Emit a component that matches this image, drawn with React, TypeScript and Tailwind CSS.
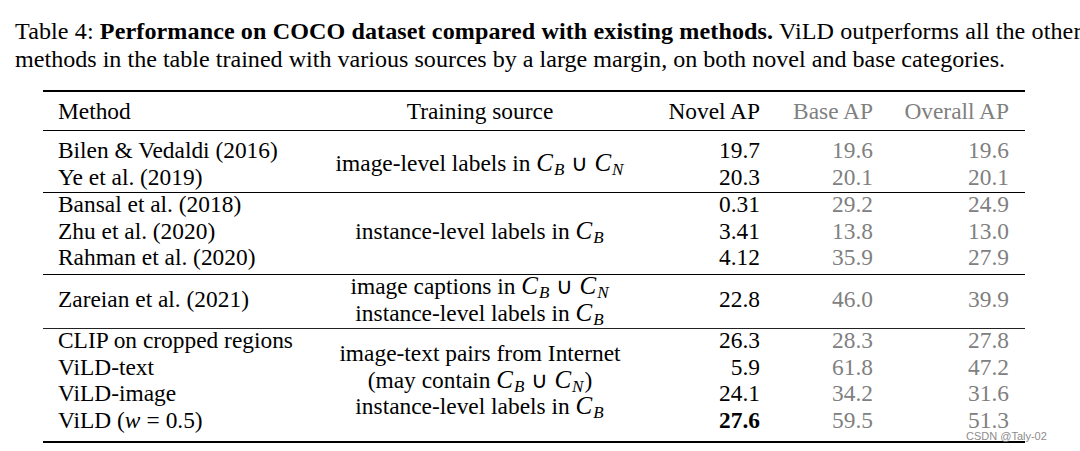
import React from "react";

const GRID = "grid grid-cols-[290px_294px_133px_113px_136px] pr-[16px]";

function C({ s }: { s: string }) {
  return (
    <span className="italic text-[25px] leading-[20px]">
      C<span className="relative top-[4px] text-[17px] leading-[12px] italic ml-[1px] mr-[1px]">{s}</span>
    </span>
  );
}

function Cup() {
  return <span className="mx-[6px] not-italic">∪</span>;
}

function Row({ children, className = "" }: { children?: React.ReactNode; className?: string }) {
  return <div className={"h-[26.5px] leading-[22px] whitespace-nowrap " + className}>{children}</div>;
}

function Group({
  methods,
  source,
  novel,
  base,
  overall,
  className = "",
  centered = false,
}: {
  methods: React.ReactNode[];
  source: React.ReactNode[];
  novel: React.ReactNode[];
  base: string[];
  overall: string[];
  className?: string;
  centered?: boolean;
}) {
  const col = centered ? "flex flex-col justify-center" : "flex flex-col";
  return (
    <div className={GRID + " " + className}>
      <div className={col + " pl-[15px]"}>
        {methods.map((m, i) => (
          <Row key={i}>{m}</Row>
        ))}
      </div>
      <div className="flex flex-col justify-center items-center">
        {source.map((s, i) => (
          <Row key={i} className="text-center">
            {s}
          </Row>
        ))}
      </div>
      <div className={col + " text-right"}>
        {novel.map((n, i) => (
          <Row key={i}>{n}</Row>
        ))}
      </div>
      <div className={col + " text-right text-[#808080]"}>
        {base.map((n, i) => (
          <Row key={i}>{n}</Row>
        ))}
      </div>
      <div className={col + " text-right text-[#808080]"}>
        {overall.map((n, i) => (
          <Row key={i}>{n}</Row>
        ))}
      </div>
    </div>
  );
}

export default function App() {
  return (
    <div className="relative w-[1080px] h-[451px] overflow-hidden bg-white text-black font-['Liberation_Serif','Times_New_Roman',serif] text-[23.4px]">
      <div className="pt-[18px] pl-[15px] leading-[27.5px] whitespace-nowrap text-[24.1px]">
        <div className="tracking-[0.1px]">
          Table 4: <b>Performance on COCO dataset compared with existing methods.</b> ViLD outperforms all the other
        </div>
        <div>methods in the table trained with various sources by a large margin, on both novel and base categories.</div>
      </div>

      <div className="ml-[43px] w-[982px] mt-[17px]">
        <div className="h-[2px] bg-black" />
        <div className={GRID + " pt-[7.5px] pb-[8.5px] leading-[22px] whitespace-nowrap"}>
          <div className="pl-[15px]">Method</div>
          <div className="text-center">Training source</div>
          <div className="text-right">Novel AP</div>
          <div className="text-right text-[#808080]">Base AP</div>
          <div className="text-right text-[#808080]">Overall AP</div>
        </div>
        <div className="h-px bg-black" />

        <Group
          className="pt-[8px]"
          methods={["Bilen & Vedaldi (2016)", "Ye et al. (2019)"]}
          source={[
            <>
              image-level labels in <C s="B" />
              <Cup />
              <C s="N" />
            </>,
          ]}
          novel={["19.7", "20.3"]}
          base={["19.6", "20.1"]}
          overall={["19.6", "20.1"]}
        />
        <div className="h-px bg-black" />

        <Group
          className="pb-[1.5px]"
          methods={["Bansal et al. (2018)", "Zhu et al. (2020)", "Rahman et al. (2020)"]}
          source={[
            <>
              instance-level labels in <C s="B" />
            </>,
          ]}
          novel={["0.31", "3.41", "4.12"]}
          base={["29.2", "13.8", "35.9"]}
          overall={["24.9", "13.0", "27.9"]}
        />
        <div className="h-px bg-black" />

        <Group
          centered
          methods={["Zareian et al. (2021)"]}
          source={[
            <>
              image captions in <C s="B" />
              <Cup />
              <C s="N" />
            </>,
            <>
              instance-level labels in <C s="B" />
            </>,
          ]}
          novel={["22.8"]}
          base={["46.0"]}
          overall={["39.9"]}
        />
        <div className="h-px bg-[#222]" />

        <Group
          className="pb-[6px]"
          methods={[
            "CLIP on cropped regions",
            "ViLD-text",
            "ViLD-image",
            <>
              ViLD (<i>w</i>
              <span className="mx-[6px]">=</span>0.5)
            </>,
          ]}
          source={[
            "image-text pairs from Internet",
            <>
              (may contain <C s="B" />
              <Cup />
              <C s="N" />)
            </>,
            <>
              instance-level labels in <C s="B" />
            </>,
          ]}
          novel={["26.3", "5.9", "24.1", <b key="b">27.6</b>]}
          base={["28.3", "61.8", "34.2", "59.5"]}
          overall={["27.8", "47.2", "31.6", "51.3"]}
        />
        <div className="h-[2px] bg-black" />
      </div>

      <div className="absolute left-[966px] top-[429px] text-[11px] leading-[14px] text-[#8c8c8c] font-['Liberation_Sans',Arial,sans-serif] whitespace-nowrap">
        CSDN @Taly-02
      </div>
    </div>
  );
}
